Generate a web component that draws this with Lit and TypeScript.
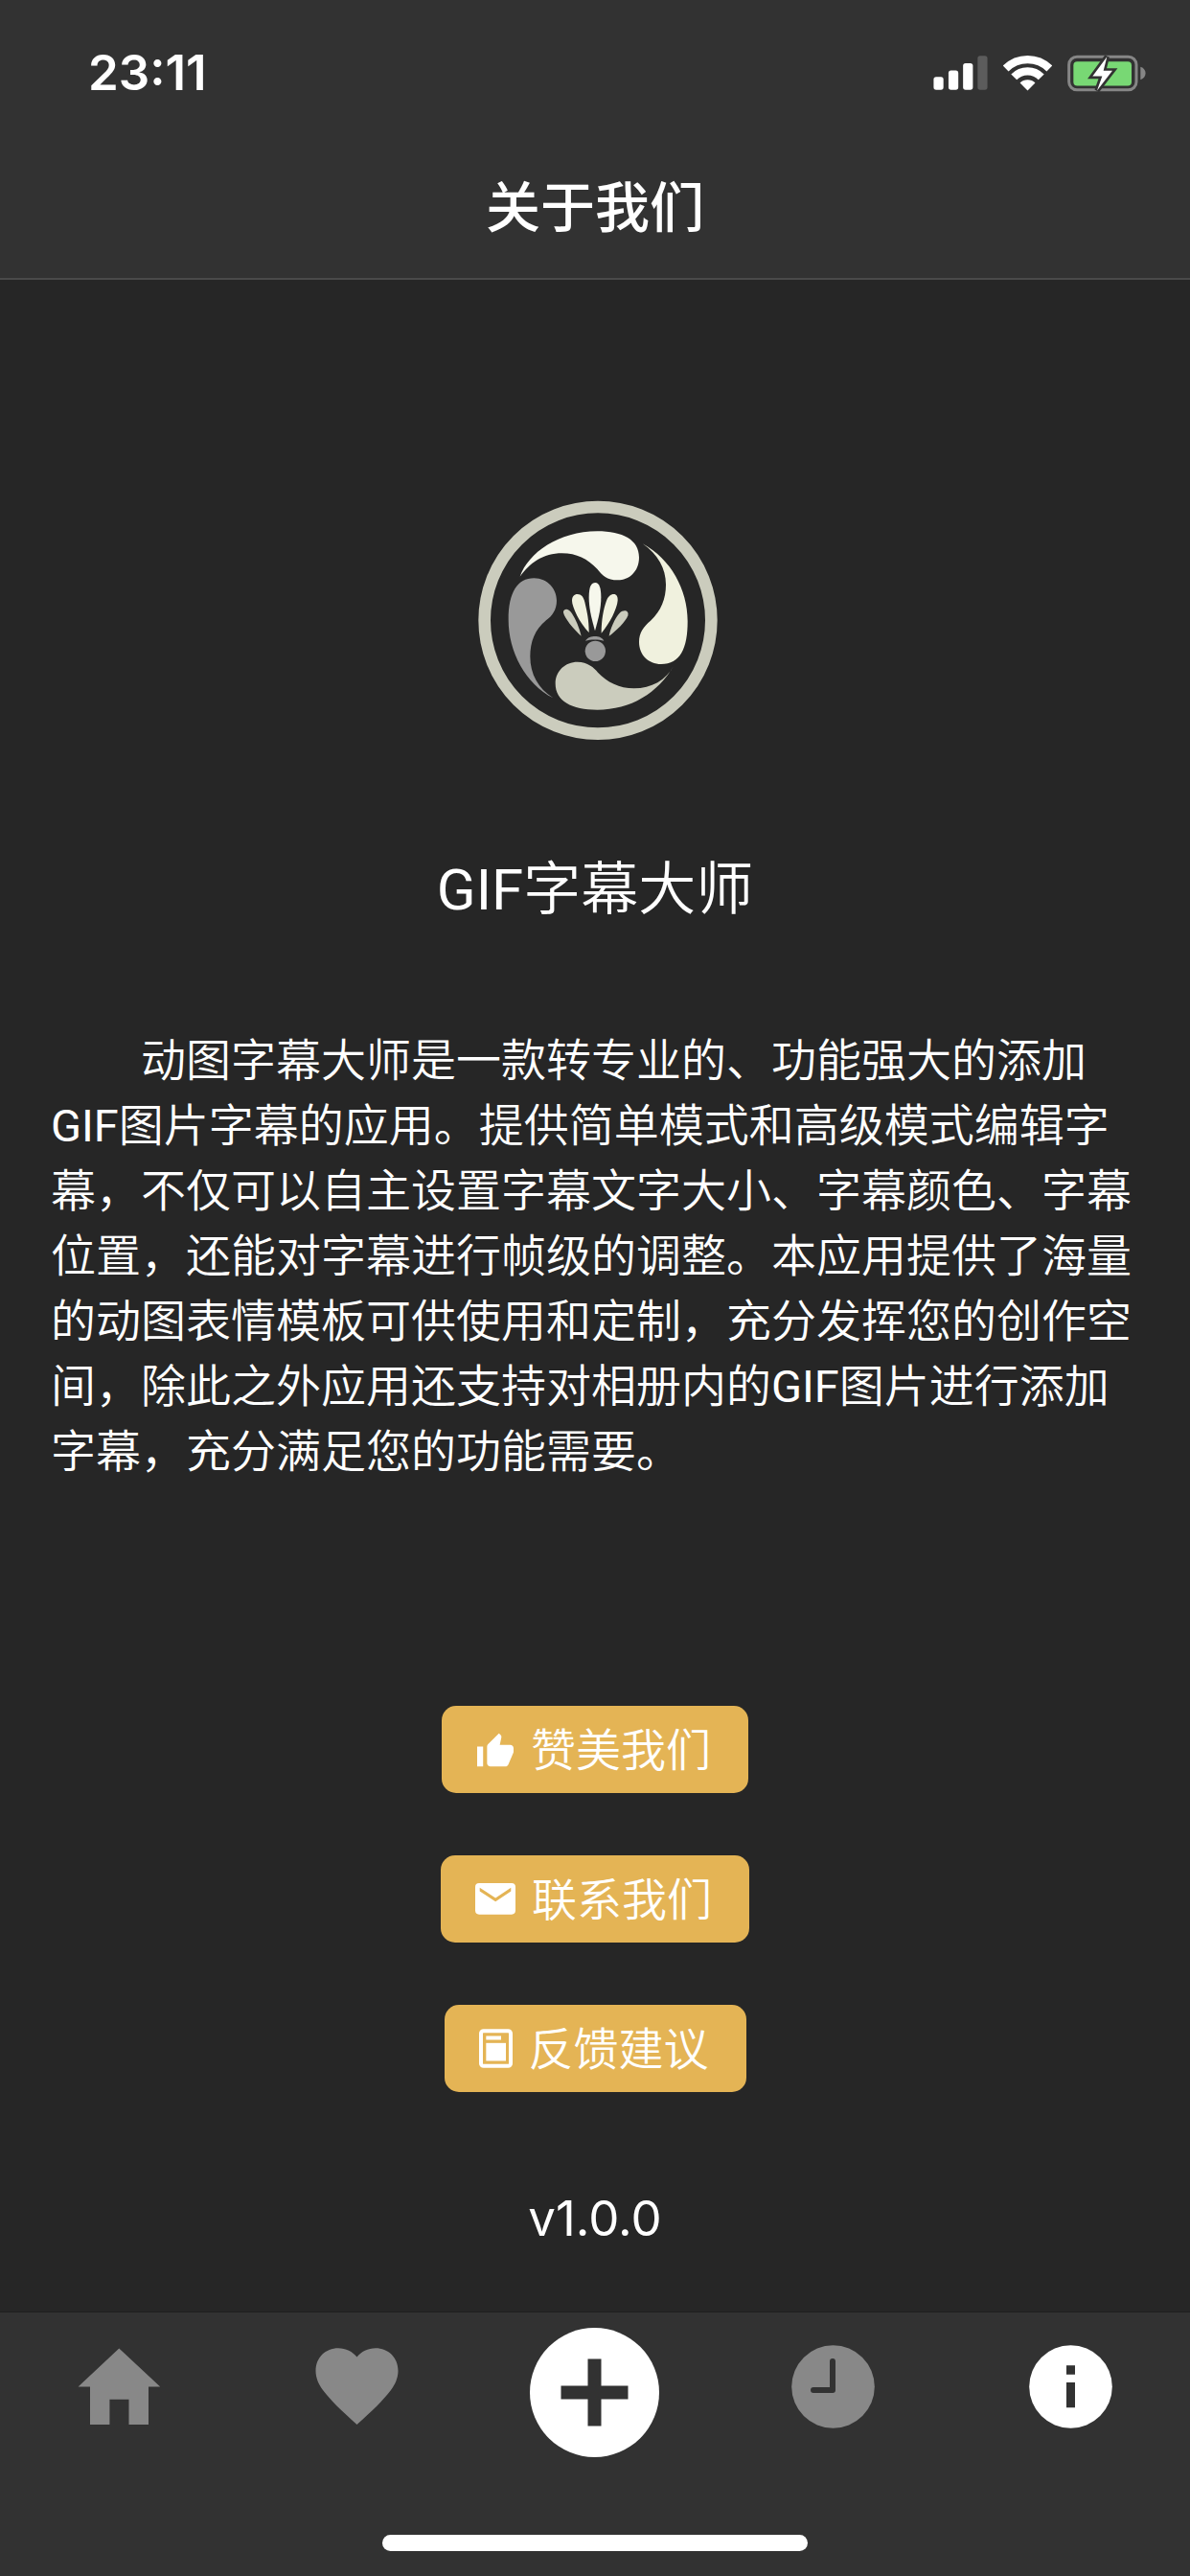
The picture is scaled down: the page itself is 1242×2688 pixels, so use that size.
import { LitElement, html, svg, css } from "lit";
import { customElement, state } from "lit/decorators.js";

const signalIcon = svg`
  <svg class="signal" viewBox="99 84 172 109" aria-hidden="true">
    <rect x="100" y="151" width="31" height="41" rx="8" fill="#fff" />
    <rect x="147" y="131" width="31" height="61" rx="8" fill="#fff" />
    <rect x="193" y="108" width="31" height="84" rx="8" fill="#fff" />
    <rect x="239" y="85" width="31" height="107" rx="8" fill="#5c5c5c" />
  </svg>`;

const wifiIcon = svg`
  <svg class="wifi" viewBox="319 80 154 113" aria-hidden="true">
    <g fill="none" stroke="#fff" stroke-width="25">
      <path d="M327 123A98 98 0 0 1 465 123" />
      <path d="M353 150A60 60 0 0 1 439 150" />
    </g>
    <path d="M396 192L372 168A34 34 0 0 1 420 168Z" fill="#fff" />
  </svg>`;

const batteryIcon = svg`
  <svg class="battery" viewBox="521 80 246 116" aria-hidden="true">
    <rect x="526" y="86" width="211" height="104" rx="25" fill="none" stroke="#868686" stroke-width="9" />
    <rect x="540" y="101" width="182" height="76" rx="12" fill="#78d874" />
    <path d="M750 118C771 124 771 152 750 158Z" fill="#868686" />
    <path d="M645 86L600 147H630L614 192L662 130H634Z" fill="#fff" stroke="#323232" stroke-width="16" paint-order="stroke" />
  </svg>`;

const logo = svg`
  <svg class="logo" viewBox="33 51 780 780" role="img" aria-label="GIF字幕大师">
    <circle cx="432" cy="442" r="355" fill="none" stroke="#cbccbd" stroke-width="38" />
    <path fill="#f6f7ec" d="M188 305C215 230 310 163 430 163C510 163 561 190 561 245C561 290 528 316 495 316C460 316 445 300 430 281C400 250 365 232 320 232C260 232 220 262 188 305Z" />
    <path fill="#f0f1de" d="M572 202C660 250 713 345 713 445C713 530 690 579 630 579C590 579 561 550 561 510C561 480 575 462 597 443C630 412 645 375 645 330C645 280 620 235 572 202Z" />
    <path fill="#cbccbd" d="M671 582C620 670 535 722 430 722C350 722 299 695 299 640C299 600 330 572 368 572C400 572 420 590 432 605C460 635 500 655 545 655C600 655 645 630 671 582Z" />
    <path fill="#999" d="M292 685C205 640 152 540 152 440C152 355 180 310 232 310C275 310 303 345 303 380C303 410 288 428 270 442C235 470 220 510 220 555C220 610 245 655 292 685Z" />
    <path fill="#f6f7ec" d="M423 475C410 430 404 400 404 370C404 335 412 324 424 324C436 324 442 340 442 370C442 400 436 430 423 475Z" />
    <g fill="#f0f1de">
      <path d="M404 480C375 450 351 400 351 380C351 367 358 360 368 360C380 360 387 368 391 385C398 415 404 440 404 480Z" />
      <path d="M443 482C443 440 450 405 458 383C463 368 472 360 482 360C490 360 495 367 494 380C492 405 470 450 443 482Z" />
    </g>
    <g fill="#cbccbd">
      <path d="M380 491C355 470 328 435 324 418C323 411 328 407 334 407C341 408 346 413 351 421C363 440 374 465 380 491Z" />
      <path d="M467 491C470 470 485 435 500 419C506 413 513 411 519 412C526 414 528 420 526 427C520 445 490 475 467 491Z" />
    </g>
    <g fill="#999">
      <path d="M393 506C400 495 412 492 423 492C434 492 446 496 451 506C435 501 408 501 393 506Z" />
      <circle cx="424" cy="538" r="32" />
    </g>
  </svg>`;

const thumbIcon = svg`
  <svg width="40" height="38" viewBox="0.5 0 23 22" fill="#fff" aria-hidden="true">
    <path d="M1 21h3.6V9H1v12zm22-11c0-1.1-.9-2-2-2h-6.31l.95-4.57.03-.32c0-.41-.17-.79-.44-1.06L14.17 1 7.59 7.59C7.22 7.95 7 8.45 7 9v10c0 1.1.9 2 2 2h9c.83 0 1.54-.5 1.84-1.22l3.02-7.05c.09-.23.14-.47.14-.73v-2z" />
  </svg>`;

const mailIcon = svg`
  <svg width="42" height="33" viewBox="0 0 125 98" aria-hidden="true">
    <path fill="#fff" fill-rule="evenodd" d="M12 0H113Q125 0 125 12V85Q125 97 113 97H12Q0 97 0 85V12Q0 0 12 0ZM14 14V25L63 57L111 25V14L63 46Z" />
  </svg>`;

const noteIcon = svg`
  <svg width="35" height="41" viewBox="0 0 105 122" fill="#fff" aria-hidden="true">
    <rect x="6" y="6" width="93" height="110" rx="8" fill="none" stroke="#fff" stroke-width="12" />
    <rect x="22" y="22" width="47" height="12" />
    <rect x="22" y="44" width="62" height="56" />
  </svg>`;

const tabs = [
  {
    id: "home",
    label: "首页",
    icon: svg`<svg class="glyph" viewBox="0 0 87 87" aria-hidden="true">
      <path d="M43.3 3.6L86.2 43.4H74V83H53.5V56.7H33.4V83H13V43.4H0.6Z" /></svg>`,
  },
  {
    id: "liked",
    label: "收藏",
    icon: svg`<svg class="glyph" viewBox="0 0 87 87" aria-hidden="true">
      <path d="M43.5 12.5C48 7 55 3.3 63 3.3C76 3.3 86.5 13 86.5 27C86.5 34 83.5 41 79 47C75 52 70 58 64.5 63.5C58 70 51 76 43.5 83C36 76 29 70 22.5 63.5C17 58 12 52 8 47C3.5 41 0.5 34 0.5 27C0.5 13 11 3.3 24 3.3C32 3.3 39 7 43.5 12.5Z" /></svg>`,
  },
  {
    id: "add",
    label: "新建",
    icon: svg`<svg class="plus" viewBox="0 0 135 135" aria-hidden="true">
      <circle cx="67.5" cy="67.5" r="67.5" fill="#fff" />
      <path d="M60.5 32.5h14v28h28v14h-28v28h-14v-28h-28v-14h28Z" fill="#323232" /></svg>`,
  },
  {
    id: "recent",
    label: "最近",
    icon: svg`<svg class="glyph" viewBox="0 0 87 87" aria-hidden="true">
      <circle cx="43.5" cy="43.5" r="43.3" />
      <path d="M43 17V47H23" fill="none" stroke="#323232" stroke-width="6" stroke-linecap="round" stroke-linejoin="round" /></svg>`,
  },
  {
    id: "about",
    label: "关于我们",
    icon: svg`<svg class="glyph" viewBox="0 0 87 87" aria-hidden="true">
      <circle cx="43.5" cy="43.5" r="43.3" />
      <path d="M39 21.3h9v9.4h-9ZM39 39h9v26.3h-9Z" fill="#323232" /></svg>`,
  },
];

const actions = [
  { label: "赞美我们", icon: thumbIcon },
  { label: "联系我们", icon: mailIcon },
  { label: "反馈建议", icon: noteIcon },
];

@customElement("app-root")
export class AppRoot extends LitElement {
  @state() private active = "about";

  static styles = css`
    :host {
      display: flex;
      flex-direction: column;
      min-height: 100vh;
      background: #262626;
      color: #fff;
      font-family: Inter, "Noto Sans CJK SC", sans-serif;
    }
    svg {
      display: block;
      flex: none;
    }
    header {
      background: #323232;
      border-bottom: 2px solid #4a4a4a;
    }
    .status {
      display: flex;
      align-items: center;
      justify-content: space-between;
      box-sizing: border-box;
      height: 132px;
      padding: 20px 46px 0 92px;
    }
    .time {
      font-size: 51px;
      font-weight: 600;
      line-height: 60px;
    }
    .indicators {
      display: flex;
      align-items: center;
      gap: 16px;
    }
    .signal {
      width: 57px;
      height: 36px;
    }
    .wifi {
      width: 51px;
      height: 38px;
    }
    .battery {
      width: 82px;
      height: 39px;
    }
    h1 {
      margin: 0;
      padding: 43px 0 31px;
      font-size: 57px;
      font-weight: 500;
      line-height: 84px;
      text-align: center;
    }
    main {
      flex: 1;
      display: flex;
      flex-direction: column;
      align-items: center;
      padding: 225px 53px 0;
    }
    .logo {
      width: 260px;
      height: 260px;
    }
    h2,
    .intro {
      font-family: Roboto, "Noto Sans CJK SC", sans-serif;
      font-weight: 350;
    }
    .latin {
      font-weight: 400;
    }
    h2 {
      margin: 110px 0 0;
      font-size: 60px;
      line-height: 84px;
    }
    .intro {
      margin: 102px 0 0;
      align-self: stretch;
      font-size: 47px;
      line-height: 68px;
      text-indent: 94px;
    }
    .actions {
      display: flex;
      flex-direction: column;
      align-items: center;
      gap: 65px;
      margin-top: 231px;
    }
    .action {
      display: flex;
      align-items: center;
      gap: 17px;
      height: 91px;
      padding: 0 39px 0 36px;
      border: 0;
      border-radius: 15px;
      background: #e4b455;
      color: #fff;
      font: inherit;
      font-size: 47px;
      font-weight: 350;
      line-height: 66px;
      cursor: pointer;
    }
    .version {
      margin: 98px 0 0;
      font-size: 51px;
      line-height: 68px;
    }
    footer {
      display: flex;
      flex-direction: column;
      align-items: center;
      gap: 81px;
      padding: 16px 0 26px;
      border-top: 1px solid #1e1e1e;
      background: #323232;
    }
    nav {
      display: grid;
      grid-template-columns: repeat(5, 1fr);
      width: 100%;
    }
    .tab {
      display: flex;
      justify-content: center;
      padding: 0;
      border: 0;
      background: none;
      cursor: pointer;
    }
    .glyph {
      width: 87px;
      height: 87px;
      margin-top: 18px;
      fill: #888;
    }
    .tab[aria-current="page"] .glyph {
      fill: #fff;
    }
    .plus {
      width: 135px;
      height: 135px;
    }
    .handle {
      width: 444px;
      height: 17px;
      border-radius: 9px;
      background: #fff;
    }
  `;

  render() {
    return html`
      <header>
        <div class="status">
          <span class="time">23:11</span>
          <div class="indicators">${signalIcon}${wifiIcon}${batteryIcon}</div>
        </div>
        <h1>关于我们</h1>
      </header>
      <main>
        ${logo}
        <h2><span class="latin">GIF</span>字幕大师</h2>
        <p class="intro">动图字幕大师是一款转专业的、功能强大的添加<span class="latin">GIF</span>图片字幕的应用。提供简单模式和高级模式编辑字幕，不仅可以自主设置字幕文字大小、字幕颜色、字幕位置，还能对字幕进行帧级的调整。本应用提供了海量的动图表情模板可供使用和定制，充分发挥您的创作空间，除此之外应用还支持对相册内的<span class="latin">GIF</span>图片进行添加字幕，充分满足您的功能需要。</p>
        <div class="actions">
          ${actions.map(
            (a) => html`<button class="action" type="button">${a.icon}<span>${a.label}</span></button>`
          )}
        </div>
        <p class="version">v1.0.0</p>
      </main>
      <footer>
        <nav>
          ${tabs.map(
            (t) => html`<button
              class="tab"
              type="button"
              aria-label=${t.label}
              aria-current=${this.active === t.id ? "page" : "false"}
              @click=${() => (this.active = t.id)}
            >${t.icon}</button>`
          )}
        </nav>
        <div class="handle"></div>
      </footer>
    `;
  }
}
